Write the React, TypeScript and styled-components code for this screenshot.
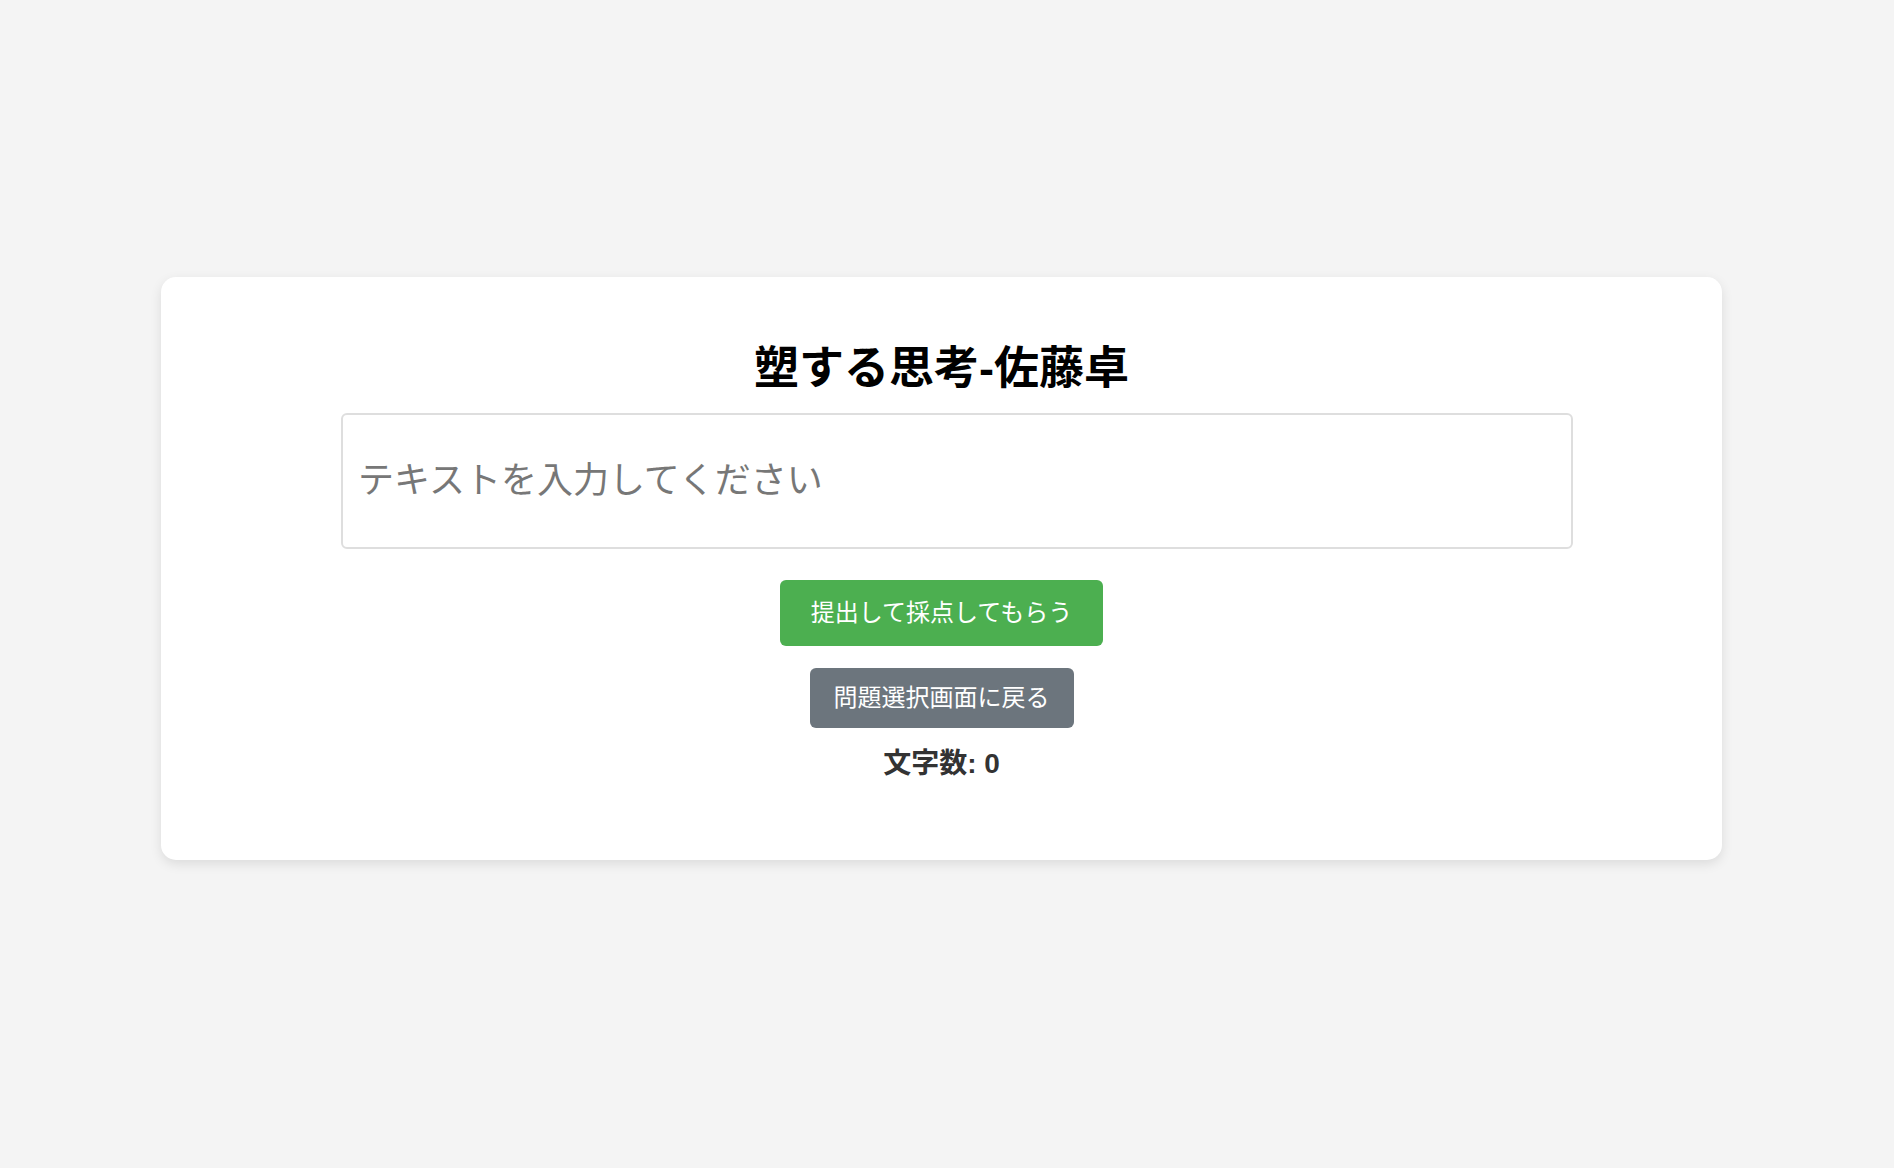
import { FC, useState } from "react";
import styled, { createGlobalStyle } from "styled-components";

const GlobalStyle = createGlobalStyle`
  html, body {
    margin: 0;
    padding: 0;
    background: #f4f4f4;
    font-family: "Liberation Sans", "Noto Sans CJK JP", sans-serif;
  }
`;

const StyledPage = styled.div`
  min-height: 1168px;
  box-sizing: border-box;
  padding: 277px 0 0 161px;
`;

const StyledCard = styled.div`
  width: 1561px;
  box-sizing: border-box;
  background: #ffffff;
  border-radius: 15px;
  box-shadow: 0 4px 12px rgba(0, 0, 0, 0.1);
  padding: 66px 0 78px;
  display: flex;
  flex-direction: column;
  align-items: center;
`;

const StyledTitle = styled.h1`
  margin: 0 0 18px;
  font-size: 45px;
  line-height: 52px;
  font-weight: 700;
  color: #000000;
`;

// single line entry, text sits in the vertical middle like the original
const StyledTextArea = styled.input`
  align-self: flex-start;
  margin-left: 180px;
  width: 1232px;
  height: 136px;
  box-sizing: border-box;
  border: 2px solid #dedede;
  border-radius: 6px;
  padding: 0 15px;
  font-family: "Liberation Sans", "Noto Sans CJK JP", sans-serif;
  font-size: 36px;
  color: #333333;
  outline: none;
  &::placeholder {
    color: #777777;
  }
`;

const StyledButton = styled.button<{ $variant: "submit" | "back" }>`
  border: none;
  border-radius: 6px;
  color: #ffffff;
  font-family: "Liberation Sans", "Noto Sans CJK JP", sans-serif;
  font-size: 24px;
  line-height: 36px;
  cursor: pointer;
  background: ${({ $variant }) => ($variant === "submit" ? "#4caf50" : "#6c757d")};
  padding: ${({ $variant }) => ($variant === "submit" ? "15px 31px" : "12px 24px")};
  margin-top: ${({ $variant }) => ($variant === "submit" ? "31px" : "22px")};
`;

const StyledCount = styled.p`
  margin: 18px 0 0;
  font-size: 28px;
  line-height: 36px;
  font-weight: 700;
  color: #333333;
`;

const App: FC = () => {
  const [text, setText] = useState("");
  return (
    <>
      <GlobalStyle />
      <StyledPage>
        <StyledCard>
          <StyledTitle>塑する思考-佐藤卓</StyledTitle>
          <StyledTextArea
            value={text}
            placeholder="テキストを入力してください"
            onChange={(e) => setText(e.target.value)}
          />
          <StyledButton $variant="submit">提出して採点してもらう</StyledButton>
          <StyledButton $variant="back">問題選択画面に戻る</StyledButton>
          <StyledCount>文字数: {text.length}</StyledCount>
        </StyledCard>
      </StyledPage>
    </>
  );
};

export default App;
